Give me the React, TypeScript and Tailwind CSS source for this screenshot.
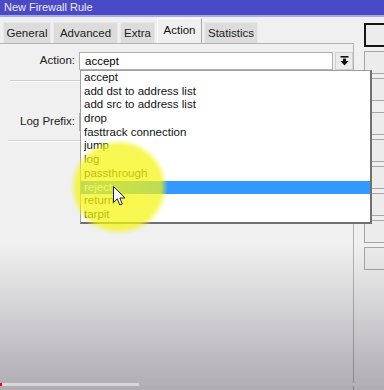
import React from "react";

const items = [
  "accept",
  "add dst to address list",
  "add src to address list",
  "drop",
  "fasttrack connection",
  "jump",
  "log",
  "passthrough",
  "reject",
  "return",
  "tarpit",
];

function DropIcon() {
  return (
    <svg width="9" height="10" viewBox="0 0 9 10">
      <rect x="0.5" y="0" width="8" height="1.6" fill="#111" />
      <rect x="3" y="2.6" width="3" height="2.6" fill="#111" />
      <polygon points="0.5,5 8.5,5 4.5,9.5" fill="#111" />
    </svg>
  );
}

function Tab({ label, w, active }: { label: string; w: string; active?: boolean }) {
  if (active) {
    return (
      <div
        className={`${w} h-[25px] bg-[#f0f0f0] border-l border-t border-[#ffffff] border-r border-r-[#a8a8a8] flex items-start justify-center pt-[4px] leading-[14px] text-[#111]`}
      >
        {label}
      </div>
    );
  }
  return (
    <div
      className={`${w} h-[21px] bg-[#dcdcdc] border border-b-0 border-[#e9e9e9] flex items-start justify-center pt-[3px] leading-[14px] text-[#222]`}
    >
      {label}
    </div>
  );
}

function Btn({ first, extra }: { first?: boolean; extra?: string }) {
  return (
    <div
      className={`w-[60px] h-[23px] bg-[#ececec] border ${
        first ? "border-[#151515] border-2 h-[24px]" : "border-[#a6a6a6]"
      } ${extra ?? ""}`}
    />
  );
}

export default function App() {
  return (
    <div className="relative w-[384px] h-[390px] overflow-hidden bg-[#f0f0f0] font-['Liberation_Sans',Arial,sans-serif] text-[11.5px] text-black">
      {/* title bar */}
      <div className="h-[15px] bg-[#4a49c6] text-[#ececf6] text-[11px] leading-[15px] pl-[4px]">
        New Firewall Rule
      </div>
      <div className="h-[2px] bg-[#a9a9e2]" />

      <div className="flex h-[373px]">
        {/* main column */}
        <div className="w-[363px] flex flex-col">
          <div className="h-[26px] flex items-end gap-[2px] pl-[3px]">
            <Tab label="General" w="w-[48px]" />
            <Tab label="Advanced" w="w-[65px]" />
            <Tab label="Extra" w="w-[35px]" />
            <Tab label="Action" w="w-[45px]" active />
            <Tab label="Statistics" w="w-[54px]" />
          </div>
          <div className="flex-1 border-t border-r border-[#b4b4b4] flex flex-col">
            <div className="mt-[8px] flex items-center h-[18px]">
              <div className="w-[75px] text-right text-[#222]">Action:</div>
              <div className="ml-[4px] w-[254px] h-[18px] bg-white border border-[#b0b0b0] pl-[5px] leading-[16px]">
                accept
              </div>
              <div className="ml-[2px] w-[18px] h-[18px] bg-[#ececec] border border-[#cfcfcf] flex items-center justify-center">
                <DropIcon />
              </div>
            </div>
            <div className="mt-[10px] ml-[10px] mr-[10px] h-[2px] border-t border-[#cfcfcf] border-b border-b-white" />
            <div className="mt-[31px] flex items-center h-[18px]">
              <div className="w-[75px] text-right text-[#222]">Log Prefix:</div>
              <div className="ml-[4px] w-[274px] h-[18px] bg-white border border-[#b0b0b0]" />
            </div>
            <div className="mt-[9px] ml-[8px] mr-[10px] h-[2px] border-t border-[#d4d4d4] border-b border-b-white" />
          </div>
        </div>

        {/* right button column */}
        <div className="flex-1 pl-[10px] pt-[6px] flex flex-col gap-[4px]">
          <Btn first />
          <Btn />
          <Btn />
          <Btn extra="mt-[7px]" />
          <Btn />
          <Btn />
          <Btn />
          <Btn />
          <Btn />
        </div>
      </div>

      {/* dropdown list */}
      <div className="absolute left-[80px] top-[70px] w-[292px] bg-white border border-[#a0a0a0] border-r-2 border-b-2 border-r-[#707070] border-b-[#707070]">
        {items.map((it) => (
          <div
            key={it}
            className={`h-[13.7px] leading-[13.7px] pl-[3px] whitespace-nowrap ${
              it === "reject" ? "bg-[#3399ff] text-white" : "text-[#111]"
            }`}
          >
            {it}
          </div>
        ))}
      </div>

      {/* yellow highlight circle */}
      <div className="absolute left-[70px] top-[139px] w-[98px] h-[96px] rounded-full bg-[radial-gradient(closest-side,rgba(245,245,20,0.78)_0%,rgba(245,245,20,0.72)_86%,rgba(245,245,20,0)_100%)]" />

      {/* mouse cursor */}
      <svg className="absolute left-[113px] top-[186px]" width="13" height="21" viewBox="0 0 13 21">
        <path
          d="M0.5 0.5 L0.5 16.5 L4.3 12.8 L6.8 19 L9.3 18 L6.8 12 L12 12 Z"
          fill="#ffffff"
          stroke="#222"
          strokeWidth="1"
          strokeLinejoin="round"
        />
      </svg>

      {/* video overlay gradient */}
      <div className="absolute left-0 right-0 top-[245px] bottom-0 bg-[linear-gradient(to_bottom,rgba(25,15,35,0)_0%,rgba(25,15,35,0.3)_100%)]" />
      {/* progress bar */}
      <div className="absolute left-0 right-0 top-[383px] h-[3px] bg-[#b4b2b7]">
        <div className="h-full w-[139px] bg-[#d8d7da]" />
      </div>
      <div className="absolute left-0 top-[383px] h-[3px] w-[2px] bg-[#ff0000]" />
    </div>
  );
}
